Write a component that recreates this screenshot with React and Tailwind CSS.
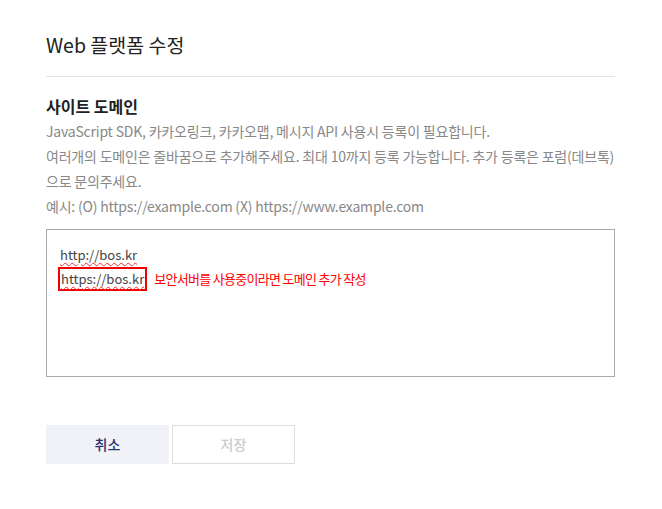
export default function App() {
  const font = { fontFamily: '"Noto Sans CJK KR", "Noto Sans", sans-serif' };
  return (
    <div className="w-[662px] h-[509px] bg-white px-[46px] pt-[30px]" style={font}>
      <h1 className="text-[19.5px] leading-[30px] text-[#222] pb-[16px] border-b border-[#e3e3e3] w-[569px]">
        Web 플랫폼 수정
      </h1>

      <h2 className="mt-[18px] text-[16px] leading-[22px] font-bold text-[#222]">사이트 도메인</h2>
      <div className="mt-[2px] text-[14px] leading-[25px] text-[#888] tracking-[-0.2px]">
        <p>JavaScript SDK, 카카오링크, 카카오맵, 메시지 API 사용시 등록이 필요합니다.</p>
        <p>여러개의 도메인은 줄바꿈으로 추가해주세요. 최대 10까지 등록 가능합니다. 추가 등록은 포럼(데브톡)</p>
        <p>으로 문의주세요.</p>
        <p>예시: (O) https://example.com (X) https://www.example.com</p>
      </div>

      <div className="mt-[10px] w-[569px] h-[148px] border border-[#aaa] px-[11px] pt-[13px] text-[13px] leading-[24px] text-[#444]">
        <div className="pl-[2px]">
          <span className="underline decoration-wavy decoration-[#e33] decoration-1 underline-offset-[2px]">http://bos.kr</span>
        </div>
        <div className="flex items-center">
          <span className="border-2 border-[#e00] px-[1px] h-[24px] leading-[19px]">
            <span className="underline decoration-wavy decoration-[#e33] decoration-1 underline-offset-[2px]">https://bos.kr</span>
          </span>
          <span className="ml-[7px] text-[#f00] text-[13px] tracking-[-0.7px]">보안서버를 사용중이라면 도메인 추가 작성</span>
        </div>
      </div>

      <div className="mt-[48px] flex gap-[3px]">
        <button className="w-[123px] h-[39px] bg-[#f0f2f8] text-[#2b3270] text-[14px] font-medium">취소</button>
        <button className="w-[123px] h-[39px] border border-[#ddd] text-[#ccc] text-[14px] font-medium">저장</button>
      </div>
    </div>
  );
}
